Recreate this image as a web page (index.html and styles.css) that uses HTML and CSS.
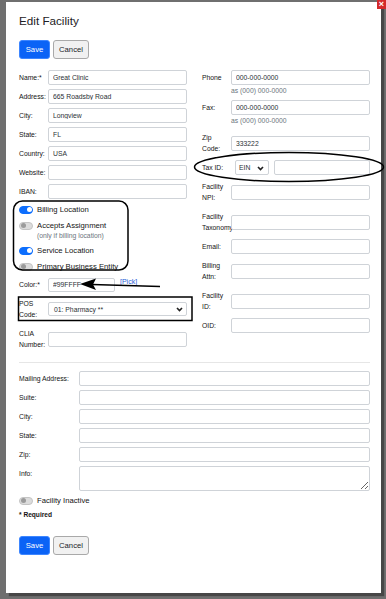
FILE: index.html
```html
<!DOCTYPE html>
<html>
<head>
<meta charset="utf-8">
<title>Edit Facility</title>
<link rel="stylesheet" href="styles.css">
</head>
<body>
<div class="modal">
  <span class="close">&#215;</span>
  <h1 class="title">Edit Facility</h1>
  <div class="actions">
    <button class="btn btn-primary">Save</button>
    <button class="btn btn-light">Cancel</button>
  </div>

  <div class="cols">
    <div class="col">
      <div class="row"><label>Name:*</label><input class="field" type="text" value="Great Clinic"></div>
      <div class="row"><label>Address:</label><input class="field" type="text" value="665 Roadsby Road"></div>
      <div class="row"><label>City:</label><input class="field" type="text" value="Longview"></div>
      <div class="row"><label>State:</label><input class="field" type="text" value="FL"></div>
      <div class="row"><label>Country:</label><input class="field" type="text" value="USA"></div>
      <div class="row"><label>Website:</label><input class="field" type="text" value=""></div>
      <div class="row"><label>IBAN:</label><input class="field" type="text" value=""></div>

      <div class="switches">
        <div class="switch on"><span class="track"></span><span class="switch-text">Billing Location</span></div>
        <div class="switch"><span class="track"></span><div><span class="switch-text">Accepts Assignment</span><small class="hint">(only if billing location)</small></div></div>
        <div class="switch on"><span class="track"></span><span class="switch-text">Service Location</span></div>
        <div class="switch"><span class="track"></span><span class="switch-text">Primary Business Entity</span></div>
      </div>

      <div class="row row-color"><label>Color:*</label><input class="field field-color" type="text" value="#99FFFF"><a class="pick">[<u>Pick</u>]</a></div>
      <div class="row row-two"><label>POS Code:</label>
        <div class="select grow"><span>01: Pharmacy **</span>
          <svg class="chev" width="7" height="5" viewBox="0 0 7 5"><path d="M1 1 L3.5 3.6 L6 1" fill="none" stroke="#222" stroke-width="1.6"/></svg>
        </div>
      </div>
      <div class="row row-two"><label>CLIA Number:</label><input class="field" type="text" value=""></div>
    </div>

    <div class="col">
      <div class="row row-top"><label>Phone</label><div class="grow"><input class="field" type="text" value="000-000-0000"><div class="help">as (000) 000-0000</div></div></div>
      <div class="row row-top"><label>Fax:</label><div class="grow"><input class="field" type="text" value="000-000-0000"><div class="help">as (000) 000-0000</div></div></div>
      <div class="row row-two"><label>Zip Code:</label><input class="field" type="text" value="333222"></div>
      <div class="row"><label>Tax ID:</label>
        <div class="select select-ein"><span>EIN</span>
          <svg class="chev" width="7" height="5" viewBox="0 0 7 5"><path d="M1 1 L3.5 3.6 L6 1" fill="none" stroke="#222" stroke-width="1.6"/></svg>
        </div>
        <input class="field" type="text" value="">
      </div>
      <div class="row row-two"><label>Facility NPI:</label><input class="field" type="text" value=""></div>
      <div class="row row-two"><label>Facility Taxonomy</label><input class="field" type="text" value=""></div>
      <div class="row"><label>Email:</label><input class="field" type="text" value=""></div>
      <div class="row row-two"><label>Billing Attn:</label><input class="field" type="text" value=""></div>
      <div class="row row-two"><label>Facility ID:</label><input class="field" type="text" value=""></div>
      <div class="row"><label>OID:</label><input class="field" type="text" value=""></div>
    </div>
  </div>

  <hr class="sep">

  <div class="mail">
    <div class="mrow"><label>Mailing Address:</label><input class="field" type="text" value=""></div>
    <div class="mrow"><label>Suite:</label><input class="field" type="text" value=""></div>
    <div class="mrow"><label>City:</label><input class="field" type="text" value=""></div>
    <div class="mrow"><label>State:</label><input class="field" type="text" value=""></div>
    <div class="mrow"><label>Zip:</label><input class="field" type="text" value=""></div>
    <div class="mrow"><label>Info:</label><textarea class="field area"></textarea></div>
  </div>

  <div class="switch inactive"><span class="track"></span><span class="switch-text">Facility Inactive</span></div>
  <div class="required">* Required</div>

  <div class="actions bottom">
    <button class="btn btn-primary">Save</button>
    <button class="btn btn-light">Cancel</button>
  </div>
</div>

<svg class="annot" width="386" height="599" viewBox="0 0 386 599">
  <ellipse cx="289" cy="167" rx="94.5" ry="14.5" fill="none" stroke="#000" stroke-width="1.5"/>
  <rect x="13.5" y="201" width="114.5" height="69" rx="9" ry="9" fill="none" stroke="#000" stroke-width="1.5"/>
  <rect x="18.5" y="297" width="173.5" height="23.5" fill="none" stroke="#000" stroke-width="1.5"/>
  <line x1="160" y1="286.5" x2="92" y2="284.5" stroke="#000" stroke-width="1.5"/>
  <polygon points="80,284 96,278.5 93,284.5 96,290" fill="#000"/>
</svg>
</body>
</html>
```

FILE: styles.css
```css
* { box-sizing: border-box; }

html, body {
  margin: 0;
  padding: 0;
}

body {
  width: 386px;
  height: 599px;
  overflow: hidden;
  position: relative;
  background: #6f6f6f;
  padding-top: 2px;
  font-family: "Liberation Sans", Arial, sans-serif;
  color: #212529;
}

.modal {
  position: relative;
  margin: 0 5px 0 6px;
  height: 591px;
  background: #fff;
  padding: 12px 11px 0 13px;
  box-shadow: 3px 3px 1px #474747;
}

.close {
  position: absolute;
  top: -2px;
  right: -5px;
  width: 9px;
  height: 9px;
  background: #d32a2a;
  color: #fff;
  font-size: 9px;
  line-height: 9px;
  text-align: center;
  font-weight: bold;
}

.title {
  margin: 0;
  font-size: 11.7px;
  line-height: 14px;
  font-weight: normal;
  color: #1d2125;
}

.actions {
  display: flex;
  gap: 3px;
  margin-top: 12px;
}

.btn {
  height: 19px;
  padding: 0 5px;
  font-family: "Liberation Sans", Arial, sans-serif;
  font-size: 7.7px;
  border-radius: 3px;
  line-height: 17px;
}

.btn-primary {
  width: 31px;
  background: #0b63f6;
  border: 1px solid #3d86ff;
  color: #fff;
}

.btn-light {
  width: 36px;
  background: #f1f1f1;
  border: 1px solid #a9a9a9;
  color: #212529;
}

.cols {
  display: grid;
  grid-template-columns: 168px 168px;
  column-gap: 15px;
  margin-top: 11px;
}

.col {
  display: flex;
  flex-direction: column;
  gap: 4px;
}

.row {
  display: flex;
  align-items: center;
  min-height: 15px;
}

.row label {
  flex: none;
  width: 29px;
  font-size: 6.8px;
  line-height: 11px;
  color: #141414;
  white-space: normal;
}

.row-two label {
  padding: 2px 0;
}

.row-top {
  align-items: flex-start;
}

.row-top label {
  padding-top: 2px;
}

.grow {
  flex: 1;
  min-width: 0;
}

.field {
  display: block;
  flex: 1;
  min-width: 0;
  width: 100%;
  height: 15px;
  margin: 0;
  padding: 0 4px;
  border: 1px solid #cfd3d8;
  border-radius: 2px;
  background: #fff;
  font-family: "Liberation Sans", Arial, sans-serif;
  font-size: 6.8px;
  color: #2b3035;
  outline: none;
}

.help {
  font-size: 6.8px;
  line-height: 10px;
  color: #6c757d;
  margin-top: 1px;
}

.select {
  position: relative;
  display: flex;
  align-items: center;
  height: 14px;
  padding: 0 5px;
  border: 1px solid #cfd3d8;
  border-radius: 2px;
  font-size: 6.8px;
  color: #2b3035;
  background: #fff;
}

.select .chev {
  position: absolute;
  right: 3px;
  top: 4px;
}

.select-ein {
  flex: none;
  width: 34px;
  height: 15px;
  margin: 0 5px 0 4px;
  padding-left: 3px;
}

.select-ein .chev {
  top: 5px;
  right: 4px;
}

.switches {
  display: flex;
  flex-direction: column;
  gap: 5px;
  padding: 1px 0 0;
}

.switch {
  display: flex;
  align-items: flex-start;
  gap: 4px;
}

.track {
  position: relative;
  flex: none;
  width: 14px;
  height: 8px;
  margin-top: 1.5px;
  border-radius: 4px;
  background: #dcdcdc;
  border: 1px solid #c4c4c4;
}

.track::after {
  content: "";
  position: absolute;
  top: 0.5px;
  left: 0.5px;
  width: 5px;
  height: 5px;
  border-radius: 50%;
  background: #9b9b9b;
}

.switch.on .track {
  background: #0d6efd;
  border-color: #0d6efd;
}

.switch.on .track::after {
  left: auto;
  right: 0.5px;
  background: #fff;
}

.switch-text {
  display: block;
  font-size: 7.7px;
  line-height: 11px;
  color: #141414;
}

.hint {
  display: block;
  font-size: 6.8px;
  line-height: 9px;
  color: #6c757d;
}

.row-color {
  margin-top: 1px;
}

.field-color {
  flex: none;
  width: 67px;
  height: 14px;
}

.pick {
  align-self: flex-start;
  margin-left: 5px;
  font-size: 7px;
  line-height: 10px;
  color: #1f5fd6;
}

.pick u {
  text-decoration: underline;
}

.sep {
  margin: 10px 0 0;
  border: 0;
  border-top: 1px solid #e6e6e6;
}

.mail {
  display: flex;
  flex-direction: column;
  gap: 4px;
  margin-top: 8px;
}

.mrow {
  display: flex;
  align-items: flex-start;
}

.mrow label {
  flex: none;
  width: 60px;
  font-size: 6.8px;
  line-height: 15px;
  color: #141414;
}

.area {
  height: 25px;
  resize: both;
  padding: 2px 4px;
}

.inactive {
  margin-top: 4px;
}

.required {
  margin-top: 4px;
  font-size: 6.6px;
  line-height: 10px;
  font-weight: bold;
  color: #141414;
}

.actions.bottom {
  margin-top: 16px;
}

.annot {
  position: absolute;
  left: 0;
  top: 0;
  pointer-events: none;
}
```
